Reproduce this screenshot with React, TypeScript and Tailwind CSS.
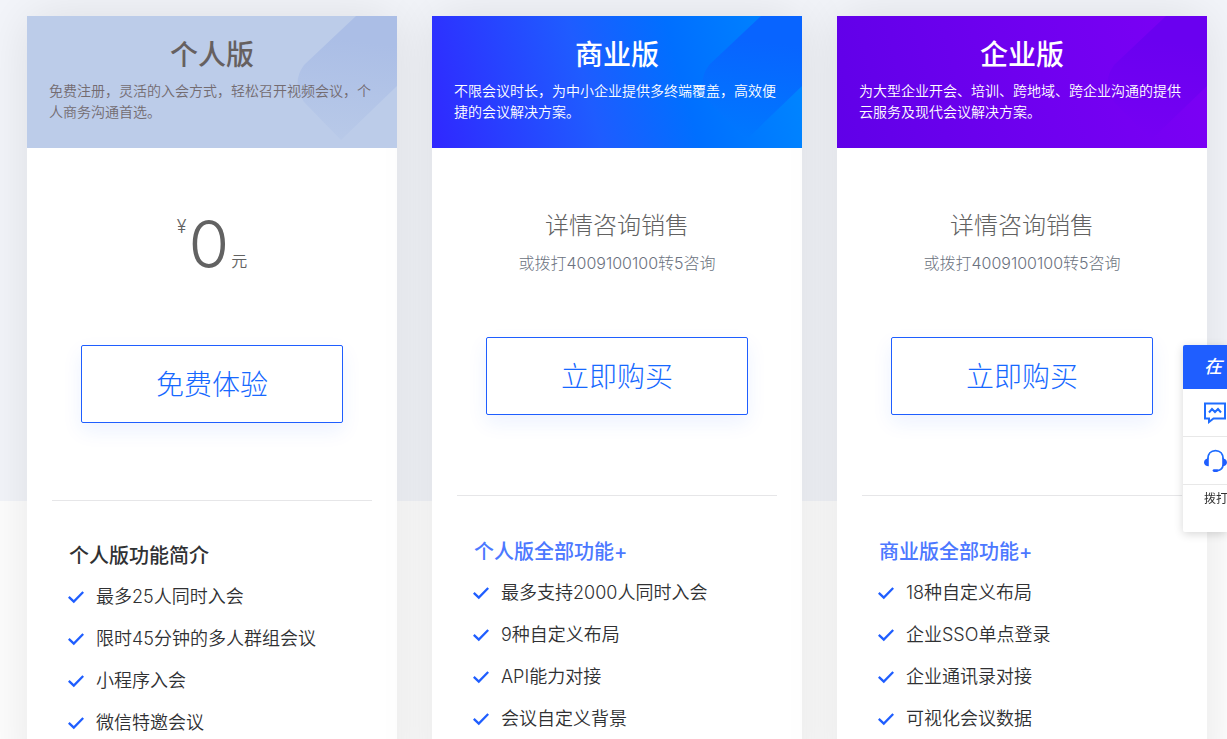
import clsx from "clsx";

interface Plan {
  name: string;
  description: string;
  free?: boolean;
  action: string;
  featureTitle: string;
  features: string[];
  headerClass: string;
  titleClass: string;
  descriptionClass: string;
  shape: { from: string; to: string };
}

const plans: Plan[] = [
  {
    name: "个人版",
    description: "免费注册，灵活的入会方式，轻松召开视频会议，个人商务沟通首选。",
    free: true,
    action: "免费体验",
    featureTitle: "个人版功能简介",
    features: ["最多25人同时入会", "限时45分钟的多人群组会议", "小程序入会", "微信特邀会议"],
    headerClass: "bg-[#bccce9]",
    titleClass: "text-[#666060]",
    descriptionClass: "text-[#736b70]",
    shape: { from: "#abbee6", to: "#b8c9e8" }
  },
  {
    name: "商业版",
    description: "不限会议时长，为中小企业提供多终端覆盖，高效便捷的会议解决方案。",
    action: "立即购买",
    featureTitle: "个人版全部功能+",
    features: ["最多支持2000人同时入会", "9种自定义布局", "API能力对接", "会议自定义背景"],
    headerClass: "bg-[linear-gradient(75deg,#3027ff_0%,#1f5cff_42%,#006fff_66%,#0088ff_100%)]",
    titleClass: "text-white",
    descriptionClass: "text-white",
    shape: { from: "#0864ff", to: "#0078ff" }
  },
  {
    name: "企业版",
    description: "为大型企业开会、培训、跨地域、跨企业沟通的提供云服务及现代会议解决方案。",
    action: "立即购买",
    featureTitle: "商业版全部功能+",
    features: ["18种自定义布局", "企业SSO单点登录", "企业通讯录对接", "可视化会议数据"],
    headerClass: "bg-[linear-gradient(75deg,#6000e8_0%,#7000f0_55%,#7c00f5_100%)]",
    titleClass: "text-white",
    descriptionClass: "text-white",
    shape: { from: "#6a00f0", to: "#7600f3" }
  }
];

function HeaderShape({ id, from, to }: { id: string; from: string; to: string }) {
  return (
    <svg className="absolute top-0 right-0" width="102" height="132" viewBox="0 0 102 132" aria-hidden="true">
      <defs>
        <linearGradient id={id} x1="0.6" y1="0" x2="0.5" y2="1">
          <stop offset="0.2" stopColor={from} />
          <stop offset="1" stopColor={to} />
        </linearGradient>
      </defs>
      <path d="M61 0 L9 49 Q-4 67 9 86 L46 124 L102 70 V0 Z" fill={`url(#${id})`} />
    </svg>
  );
}

function CheckIcon() {
  return (
    <svg width="16" height="14" viewBox="0 0 16 14" fill="none" aria-hidden="true">
      <path d="M0.8 6.8 L5.8 11.6 L15.2 2" stroke="#1f5eff" strokeWidth="2.3" />
    </svg>
  );
}

function ChatIcon() {
  return (
    <svg width="22" height="22" viewBox="0 0 22 22" fill="none" stroke="#1f6dff" aria-hidden="true">
      <path d="M1 1.5 H21 V16.5 H9.5 L5 20 V16.5 H1 Z" strokeWidth="2" />
      <path d="M5 10.5 L8 7 L11 10 L14 7 L17 10.5" strokeWidth="2" />
    </svg>
  );
}

function HeadsetIcon() {
  return (
    <svg width="24" height="24" viewBox="0 0 24 24" fill="none" aria-hidden="true">
      <path d="M4 10 C4 4.500 7.300 1.200 12 1.200 S20 4.500 20 10" stroke="#1f6dff" strokeWidth="2" />
      <path d="M20 16 C19.500 19.500 17.500 21.500 14 22" stroke="#1f6dff" strokeWidth="1.800" />
      <path d="M5 9.500 V17.500 C2 17.500 0 16 0 13.500 S2 9.500 5 9.500 Z M19 9.500 V17.500 C22 17.500 24 16 24 13.500 S22 9.500 19 9.500 Z" fill="#1f5eff" />
      <rect x="9" y="20.500" width="6" height="3" rx="1.500" fill="#1f5eff" />
    </svg>
  );
}

function PlanPrice() {
  return (
    <div className="flex h-[136px] justify-center text-[#626262]">
      <span className="mt-1 mr-0.5 text-lg font-light">¥</span>
      <span className="text-[66px] leading-[70px] font-light">0</span>
      <span className="mt-10 ml-0.5 text-base font-[350]">元</span>
    </div>
  );
}

function PlanContact() {
  return (
    <div className="h-[128px] text-center font-light">
      <p className="text-2xl leading-[34px] text-[#626262]">详情咨询销售</p>
      <p className="mt-2 text-base text-[#6b7280]">或拨打4009100100转5咨询</p>
    </div>
  );
}

function PlanCard({ plan, index }: { plan: Plan; index: number }) {
  return (
    <section className="flex-1 bg-white shadow-[0_0_50px_rgba(0,0,0,0.1)]">
      <header className={clsx("relative px-[22px] pt-[19px] pb-[26px]", plan.headerClass)}>
        <HeaderShape id={`shape-${index}`} from={plan.shape.from} to={plan.shape.to} />
        <h2 className={clsx("relative text-center text-[28px] leading-10 font-medium", plan.titleClass)}>
          {plan.name}
        </h2>
        <p className={clsx("relative mt-[5px] text-sm leading-[21px] font-[350]", plan.descriptionClass)}>
          {plan.description}
        </p>
      </header>
      <div className="px-[25px] pt-[61px]">
        {plan.free ? <PlanPrice /> : <PlanContact />}
        <button
          type="button"
          className="mx-auto block h-[78px] w-[262px] rounded-xs border border-[#1f5eff] bg-white pt-0.5 text-[28px] font-light text-[#1668ff] shadow-[0_8px_20px_rgba(31,94,255,0.08)]"
        >
          {plan.action}
        </button>
        <hr className={clsx("border-[#e6e6e8]", plan.free ? "mt-[77px]" : "mt-20")} />
        <div className={clsx("px-4 pb-10", plan.free ? "pt-[41px]" : "pt-[42px]")}>
          <h3 className={clsx("pl-px text-xl leading-7 font-medium", plan.free ? "text-[#303133]" : "text-[#4c78ff]")}>
            {plan.featureTitle}
          </h3>
          <ul className="mt-1.5 text-lg leading-[42px] font-[350] text-[#303133]">
            {plan.features.map((feature) => (
              <li key={feature} className="flex items-center gap-3">
                <CheckIcon />
                <span>{feature}</span>
              </li>
            ))}
          </ul>
        </div>
      </div>
    </section>
  );
}

function ServiceBar() {
  return (
    <aside className="fixed top-[345px] right-0 w-11 overflow-hidden rounded-l-xs bg-white shadow-[0_2px_10px_rgba(0,0,0,0.16)]">
      <div className="h-11 bg-[#1f5eff] pl-[21px] text-lg leading-[44px] font-medium text-white italic">在</div>
      <button type="button" aria-label="在" className="flex h-12 w-full items-center border-b border-[#e8e8e8] pl-[21px]">
        <ChatIcon />
      </button>
      <button type="button" aria-label="拨打" className="flex h-12 w-full items-center border-b border-[#e8e8e8] pl-[21px]">
        <HeadsetIcon />
      </button>
      <p className="h-[47px] pt-1 pl-[21px] text-xs leading-5 whitespace-nowrap text-[#333]">拨打</p>
    </aside>
  );
}

export default function App() {
  return (
    <main className="h-screen overflow-hidden bg-[linear-gradient(#f3f5fa_501px,#fefefe_501px)] font-[Inter,'Noto_Sans_CJK_SC',sans-serif]">
      <div className="flex gap-[35px] pt-4 pr-5 pl-[27px]">
        {plans.map((plan, index) => (
          <PlanCard key={plan.name} plan={plan} index={index} />
        ))}
      </div>
      <ServiceBar />
    </main>
  );
}
